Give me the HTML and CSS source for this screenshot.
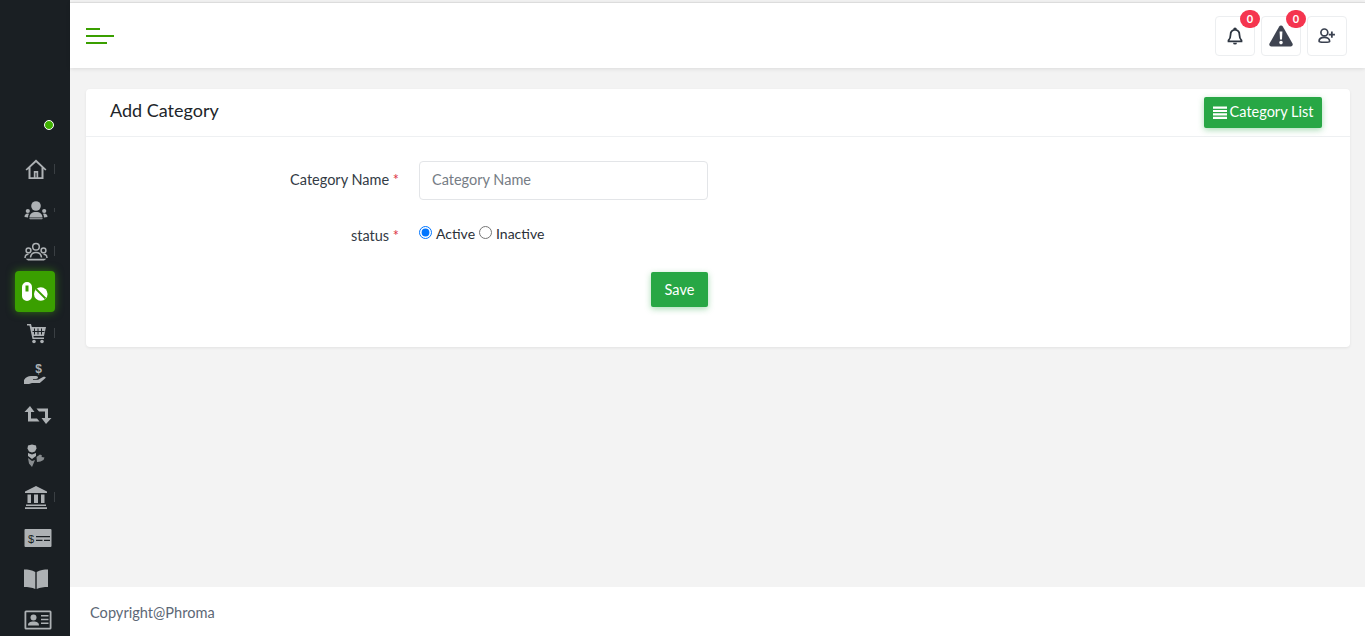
FILE: index.html
```html
<!DOCTYPE html>
<html lang="en">
<head>
<meta charset="utf-8">
<title>Add Category</title>
<link rel="stylesheet" href="styles.css">
</head>
<body>
<div class="app">
  <aside class="sidebar">
    <div class="status"><span class="dot"></span></div>
    <nav class="nav">
      <a class="item tick"><svg class="ico" viewBox="0 0 24 24" width="24" height="24"><path d="M12 2.500 1.500 12.500l1.200 1.100L4.500 12v10h15V12l1.800 1.600 1.200-1.100zM6.500 20.200v-9.900L12 5.200l5.500 5.100v9.900h-3.300v-6.200H9.800v6.200zm5-4.400h1v4.400h-1z" fill-rule="evenodd"/></svg></a>
      <a class="item tick tick-s"><svg class="ico" viewBox="0 0 24 24" width="24" height="24"><circle cx="12" cy="8" r="4.800"/><circle cx="3.800" cy="13" r="2.100"/><circle cx="20.200" cy="13" r="2.100"/><path d="M5.500 19.500c0-3.500 2.500-5.500 6.500-5.500s6.500 2 6.500 5.500zM.500 19c0-2 1.200-3.500 3.300-3.500l1.200.3c-.7 1-1 2.200-1 3.700zM23.500 19c0-2-1.200-3.500-3.300-3.500l-1.200.3c.7 1 1 2.200 1 3.700zM5 20.300h14l-1 .9H6z"/></svg></a>
      <a class="item tick"><svg class="ico" viewBox="0 0 24 24" width="24" height="24"><path d="M12 4.500a3.300 3.300 0 1 1 0 6.600 3.300 3.300 0 0 1 0-6.600zM4.500 9a2.400 2.400 0 1 1 0 4.800 2.400 2.400 0 0 1 0-4.800zM19.500 9a2.400 2.400 0 1 1 0 4.800 2.400 2.400 0 0 1 0-4.800z" fill="none" stroke="#adb1b4" stroke-width="1.500"/><path d="M1 19c0-2.500 1.500-3.700 3.500-3.700M23 19c0-2.500-1.500-3.700-3.500-3.700M6.500 18.500c.3-3 2.500-5 5.500-5s5.200 2 5.500 5" fill="none" stroke="#adb1b4" stroke-width="1.500"/><path d="M1.500 19.800h21L20 21.500H4z"/></svg></a>
      <a class="item active"><span class="pill-box"><svg viewBox="0 0 26 19" width="26" height="19"><path d="M5 0a5 5 0 0 1 5 5v9a5 5 0 0 1-10 0V5a5 5 0 0 1 5-5zM3.500 3.500v6h3v-6z" fill="#fff" fill-rule="evenodd"/><circle cx="18.800" cy="12" r="6.800" fill="#fff"/><path d="m14 7 9.500 9.500" stroke="#3a9f00" stroke-width="1.800"/></svg></span></a>
      <a class="item tick"><svg class="ico" viewBox="0 0 24 24" width="24" height="24"><path d="M3 3h4l.8 3H22l-2 9H9.500l.3 1.500H20V18H8.500L5.500 4.500H3z"/><circle cx="10" cy="20.500" r="1.800"/><circle cx="18" cy="20.500" r="1.800"/><path d="M10.500 7.500v6M14 7.500v6M17.500 7.500v6M8.500 10.500h12" stroke="#1a1f23" stroke-width="1" fill="none"/></svg></a>
      <a class="item"><svg class="ico" viewBox="0 0 26 24" width="26" height="24"><text class="dollar" x="15.500" y="11" text-anchor="middle">$</text><path d="M1 18c2-3 4-4 7-4h5c1.500 0 2 .8 2 1.500s-.8 1.500-2 1.500h-3v.8h5l5-2.800c1.200-.6 2.500 0 2.800.7l-6 5.300H9l-3 1H1z"/></svg></a>
      <a class="item"><svg class="ico ico-w" viewBox="0 0 28 20" width="28" height="20"><path d="M6 1 .500 7h3.500v9.500h11.500l-2.500-3H7V7h3.500zM22 19l5.500-6H24V3.500H12.500l2.500 3h6V13h-3.500z"/></svg></a>
      <a class="item"><svg class="ico" viewBox="0 0 24 24" width="24" height="24"><path d="M4 1.500 8 .500l4 1 .5 3-1.500 3-3 1-3-1-1.500-3z"/><path d="m4 9 4 1.500L12 9v3l-4 3-4-3z"/><path d="m12.500 13 3.500-2.500 2 1-.5 1.500 3 .5-1 2.500-3 1.500-3.500 .5zM4 14l4 3 3-1-3 7-3-3.500z" opacity=".75"/></svg></a>
      <a class="item tick"><svg class="ico" viewBox="0 0 24 24" width="24" height="24"><path d="M12 1 1 6.500V8h22V6.500zM3.500 9.500H7V18H3.500zM10 9.500h4V18h-4zM17 9.500h3.500V18H17zM2 19.500h20V21H2zM1 22.300h22V24H1z"/></svg></a>
      <a class="item"><svg class="ico ico-w" viewBox="0 0 28 20" width="28" height="20"><path fill-rule="evenodd" d="M1.500 1h25a1 1 0 0 1 1 1v16a1 1 0 0 1-1 1h-25a1 1 0 0 1-1-1V2a1 1 0 0 1 1-1zM12 8v1.200h14V8zM12 11.800V13h6.500v-1.200zM20 11.800V13h6v-1.200z"/><text class="dollar-s" x="7" y="14.500" text-anchor="middle">$</text></svg></a>
      <a class="item"><svg class="ico" viewBox="0 0 26 22" width="26" height="22"><path d="M1 1.500c4 0 8 .5 11.300 2.500V21C9 19.500 5 19 1 19zM25 1.500c-4 0-8 .5-11.300 2.500V21c3.300-1.500 7.300-2 11.300-2z"/></svg></a>
      <a class="item"><svg class="ico ico-w" viewBox="0 0 28 20" width="28" height="20"><path fill-rule="evenodd" d="M2 .500h24a1.500 1.500 0 0 1 1.500 1.500v16a1.500 1.500 0 0 1-1.500 1.500H2A1.500 1.500 0 0 1 .500 18V2A1.500 1.500 0 0 1 2 .500zM2.300 2.300v15.400h23.400V2.300z"/><circle cx="9.500" cy="7.500" r="3"/><path d="M4 15.500c0-3 2-4 5.500-4s5.500 1 5.500 4zM17 5h7.500v1.500H17zM17 8.800h7.500v1.500H17zM17 12.500h7.500V14H17z"/></svg></a>
    </nav>
  </aside>
  <div class="content">
    <header class="topbar">
      <button class="burger" aria-label="Menu"><span class="bar b1"></span><span class="bar b2"></span><span class="bar b3"></span></button>
      <div class="actions">
        <a class="action"><svg viewBox="0 0 18 20" width="16" height="18"><path d="M9 1.500c-.6 0-1 .4-1 1v.7C5.500 3.800 4 5.800 4 8.500c0 3.500-.8 4.800-2.300 6.300V16h14.600v-1.200C14.800 13.300 14 12 14 8.500c0-2.700-1.500-4.700-4-5.300v-.7c0-.6-.4-1-1-1z" fill="none" stroke="#2d3540" stroke-width="2"/><path d="M6.800 17.500a2.200 2.200 0 0 0 4.400 0z" fill="#2d3540"/></svg><span class="badge">0</span></a>
        <a class="action"><svg viewBox="0 0 24 22" width="24" height="22"><path d="M12 .500c.8 0 1.400.4 1.800 1.100l9.700 17c.7 1.300-.2 2.900-1.800 2.900H2.300C.7 21.500-.2 19.900.500 18.600l9.700-17C10.600.900 11.200.500 12 .500z" fill="#3f4451"/><path d="M10.600 6.500h2.800l-.4 8h-2zM12 15.800a1.800 1.800 0 1 1 0 3.600 1.800 1.800 0 0 1 0-3.600z" fill="#fff"/></svg><span class="badge">0</span></a>
        <a class="action"><svg viewBox="0 0 20 17" width="18" height="15"><circle cx="7" cy="5" r="3.900" fill="none" stroke="#3a4150" stroke-width="1.900"/><path d="M1 15c0-3 2.500-4.300 6-4.300s6 1.300 6 4.300c0 .8-2 1.200-6 1.200s-6-.4-6-1.200z" fill="none" stroke="#3a4150" stroke-width="1.900"/><path d="M15.500 4v7M12 7.500h7" stroke="#3a4150" stroke-width="2"/></svg></a>
      </div>
    </header>
    <main class="main">
      <section class="card">
        <div class="card-head">
          <h1 class="card-title">Add Category</h1>
          <a class="btn btn-list"><svg viewBox="0 0 14 14" width="14" height="14"><path d="M0 .500h14v2.200H0zM0 3.900h14v2.200H0zM0 7.300h14v2.200H0zM0 10.700h14v2.200H0z" fill="#fff"/></svg><span class="btn-text">Category List</span></a>
        </div>
        <form class="card-body">
          <div class="row row-name">
            <label class="label">Category Name <span class="req">*</span></label>
            <input class="input" type="text" placeholder="Category Name">
          </div>
          <div class="row row-status">
            <label class="label label-status">status <span class="req">*</span></label>
            <div class="radios">
              <input class="radio" type="radio" name="status" id="s1" checked><label for="s1">Active</label>
              <input class="radio" type="radio" name="status" id="s2"><label for="s2">Inactive</label>
            </div>
          </div>
          <div class="row row-save"><button type="button" class="btn btn-save">Save</button></div>
        </form>
      </section>
    </main>
    <footer class="footer">Copyright@Phroma</footer>
  </div>
</div>
</body>
</html>
```
FILE: styles.css
```css
* { box-sizing: border-box; }
html, body { margin: 0; height: 100%; }
body { font-family: "Lato", "Noto Sans", sans-serif; font-size: 14px; color: #212529; overflow: hidden; background: #f3f3f3; }
.app { display: flex; height: 636px; overflow: hidden; }

.sidebar { width: 70px; flex: none; background: #1a1f23; overflow: hidden; }
.status { height: 147px; padding: 120px 0 0 44px; }
.dot { display: block; width: 10px; height: 10px; border-radius: 50%; background: #3fb000; border: 1.500px solid #fff; }
.nav { display: flex; flex-direction: column; padding-top: 1px; }
.item { height: 41px; flex: none; display: flex; align-items: center; justify-content: center; padding-left: 2px; position: relative; }
.item.active { padding-left: 0; }
.ico { fill: #adb1b4; display: block; overflow: visible; }
.ico-w { margin-left: 3px; }
.tick::after { content: ""; position: absolute; left: 54px; top: 16px; width: 1px; height: 10px; background: #3a3f43; }
.tick-s::after { height: 4px; top: 19px; }
.pill-box { width: 40px; height: 41px; background: #3a9f00; border-radius: 4px; display: flex; align-items: center; justify-content: center; box-shadow: 0 0 8px rgba(70, 190, 0, .55); }
.dollar { font: bold 12px "Liberation Sans", sans-serif; fill: #adb1b4; }
.dollar-s { font: 11px "Liberation Sans", sans-serif; fill: #1a1f23; }

.content { flex: 1; min-width: 0; display: flex; flex-direction: column; }
.topbar { height: 66px; flex: none; margin-top: 2px; background: #fff; border-top: 1px solid #dcdcdc; box-shadow: 0 1px 4px rgba(0,0,0,.1); display: flex; align-items: center; justify-content: space-between; padding: 0 18px 0 16px; position: relative; }
.burger { display: flex; flex-direction: column; gap: 5px; width: 28px; padding: 0; background: none; border: 0; }
.bar { display: block; height: 2px; background: #3a9f00; }
.b1 { width: 14px; } .b2 { width: 28px; } .b3 { width: 21px; }
.actions { display: flex; gap: 6px; }
.action { width: 40px; height: 40px; border: 1px solid #eceef0; border-radius: 4px; display: flex; align-items: center; justify-content: center; position: relative; }
.badge { position: absolute; left: 24px; top: -7px; width: 20px; height: 18px; border-radius: 9px; background: #f5354f; color: #fff; font-size: 11px; font-weight: 700; display: flex; align-items: center; justify-content: center; }

.main { flex: 1; padding: 21px 15px 0 16px; }
.card { height: 258px; background: #fff; border-radius: 4px; box-shadow: 0 1px 3px rgba(0,0,0,.07); }
.card-head { height: 48px; border-bottom: 1px solid #eef0f2; display: flex; align-items: center; justify-content: space-between; padding: 0 28px 2px 24px; }
.card-title { margin: 0 0 4px; font-size: 18px; font-weight: 400; color: #212529; }
.btn { background: #28a745; color: #fff; border: 0; border-radius: 2px; font: inherit; display: inline-flex; align-items: center; justify-content: center; box-shadow: 0 2px 6px rgba(40,167,69,.4); }
.btn-list { width: 118px; height: 31px; gap: 3px; font-size: 14.500px; margin-top: 2px; }
.btn-text { margin-top: -2px; }
.card-body { padding-top: 24px; }
.row { display: flex; align-items: center; width: 622px; }
.label { width: 313px; text-align: right; font-size: 14.500px; color: #333b45; flex: none; padding-bottom: 2px; }
.req { color: #dc3545; }
.input { width: 289px; height: 39px; margin-left: 20px; border: 1px solid #e3e5e8; border-radius: 4px; padding: 0 12px 2px; font: inherit; font-size: 14.500px; color: #495057; outline: none; }
.input::placeholder { color: #767d85; opacity: 1; }
.row-status { margin-top: 25px; height: 20px; }
.label-status { padding: 1px 0 0; }
.radios { margin: -4px 0 0 20px; display: flex; align-items: center; font-size: 14px; color: #2a3038; }
.radio { margin: -2px 4px 0 0; width: 13px; height: 13px; }
.radio + label { margin-right: 4px; }
.row-save { justify-content: flex-end; margin-top: 27px; }
.btn-save { width: 57px; height: 35px; font-size: 14.500px; padding-bottom: 1px; }

.footer { height: 49px; flex: none; background: #fff; display: flex; align-items: center; padding: 1px 0 0 20px; font-size: 14.600px; color: #5d6876; }
```
